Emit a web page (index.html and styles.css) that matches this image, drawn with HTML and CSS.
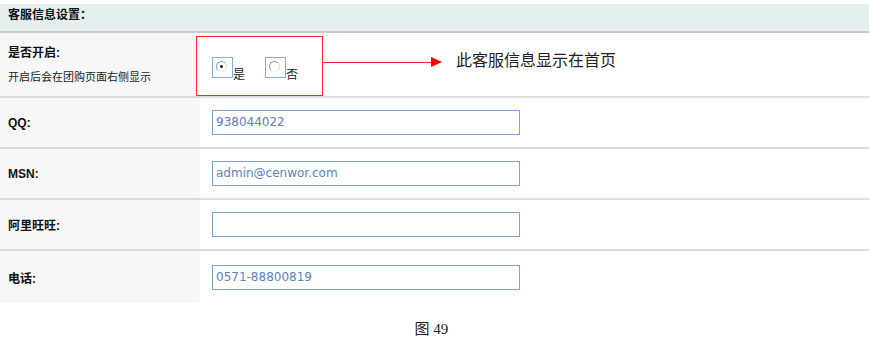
FILE: index.html
```html
<!DOCTYPE html>
<html>
<head>
<meta charset="utf-8">
<link rel="stylesheet" href="styles.css">
</head>
<body>
<div class="page">
  <div class="head">客服信息设置：</div>
  <div class="row r1">
    <div class="lab">
      <div class="t">是否开启:</div>
      <div class="s">开启后会在团购页面右侧显示</div>
    </div>
    <div class="val">
      <div class="redbox">
        <span class="radio on"><span class="dot"></span></span><span class="rl">是</span>
        <span class="radio"></span><span class="rl">否</span>
      </div>
      <div class="arrow"><span class="line"></span><span class="head-tri"></span></div>
      <div class="note">此客服信息显示在首页</div>
    </div>
  </div>
  <div class="row">
    <div class="lab"><div class="t">QQ:</div></div>
    <div class="val"><div class="inp">938044022</div></div>
  </div>
  <div class="row">
    <div class="lab"><div class="t">MSN:</div></div>
    <div class="val"><div class="inp">admin@cenwor.com</div></div>
  </div>
  <div class="row">
    <div class="lab"><div class="t">阿里旺旺:</div></div>
    <div class="val"><div class="inp"></div></div>
  </div>
  <div class="row last">
    <div class="lab"><div class="t">电话:</div></div>
    <div class="val"><div class="inp">0571-88800819</div></div>
  </div>
  <div class="cap">图 49</div>
</div>
</body>
</html>
```
FILE: styles.css
```css
html, body { margin: 0; padding: 0; background: #fff; }
body { font-family: "Liberation Sans", "Noto Sans CJK SC", sans-serif; font-size: 12px; color: #222; }
.page { width: 869px; padding-top: 4px; }
.head {
  height: 27px; line-height: 23px; background: #e4f0f0;
  border-bottom: 2px solid #c8cccc; padding-left: 8px;
  font-weight: bold; font-size: 12px; color: #111;
}
.row { display: flex; height: 49px; border-bottom: 2px solid #dcdcdc; }
.row.r1 { height: 63px; }
.row.last { border-bottom: none; height: 52px; }
.lab { width: 200px; flex: none; box-sizing: border-box; padding-left: 8px; background: #f7f7f7; display: flex; flex-direction: column; justify-content: center; border-right: 1px solid #fafcfc; }
.lab .t { font-weight: bold; font-size: 12px; color: #111; }
.r1 .lab { justify-content: flex-start; padding-top: 10px; }
.r1 .lab .s { margin-top: 8px; font-size: 11px; color: #222; }
.val { flex: 1; display: flex; align-items: center; padding-left: 12px; position: relative; }
.r1 .val { padding-left: 0; align-items: flex-start; }
.redbox {
  margin-left: -4px; margin-top: 3px; width: 127px; height: 60px; border: 1px solid #ff2a2a;
  display: flex; align-items: center; padding-left: 15px; box-sizing: border-box; padding-top: 2px;
}
.radio { width: 19px; height: 19px; border: 1px solid #8aaad8; background: #fff; display: inline-block; position: relative; flex: none; }
.radio::before { content: ""; position: absolute; left: 3px; top: 3px; width: 11px; height: 11px; border-radius: 50%; border: 1px solid #999; border-right-color: #ddd; border-bottom-color: #eee; box-sizing: border-box; }
.radio .dot { position: absolute; left: 7px; top: 7px; width: 3px; height: 3px; background: #111; border-radius: 50%; }
.rl { font-size: 12px; align-self: flex-end; margin-bottom: 13px; margin-right: 20px; }
.rl:last-child { margin-right: 0; }
.arrow { display: flex; align-items: center; margin-top: 24px; margin-left: -1px; }
.arrow .line { width: 109px; height: 1px; background: #ff2020; }
.arrow .head-tri { width: 0; height: 0; border-top: 5px solid transparent; border-bottom: 5px solid transparent; border-left: 11px solid #ff0000; }
.note { margin-left: 14px; margin-top: 14px; font-size: 16px; color: #222; }
.inp {
  width: 308px; height: 25px; border: 1px solid #7fa3d4; box-sizing: border-box;
  font-family: "DejaVu Sans", sans-serif; font-size: 12px; color: #5b80c4; line-height: 23px; padding-left: 3px;
}
.cap { text-align: center; font-family: "Liberation Serif", "Noto Sans CJK SC", serif; font-size: 15px; margin-top: 14px; padding-right: 6px; }
```
